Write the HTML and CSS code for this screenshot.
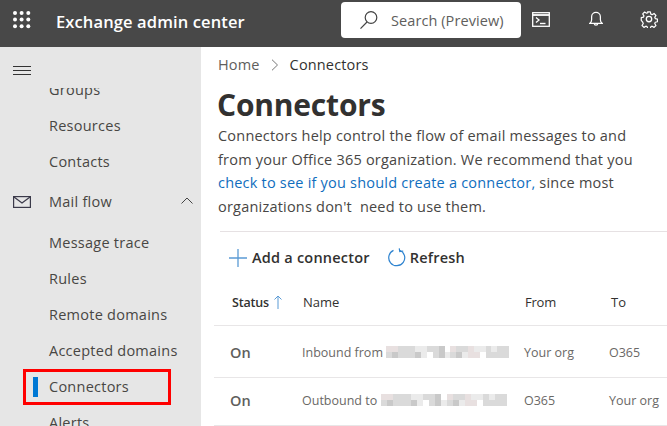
FILE: index.html
```html
<!DOCTYPE html>
<html lang="en">
<head>
<meta charset="utf-8">
<title>Exchange admin center</title>
<link rel="stylesheet" href="styles.css">
</head>
<body>
<header class="topbar">
  <svg class="waffle" width="18" height="18" viewBox="0 0 18 18" fill="#fff"><circle cx="2" cy="2" r="2"/><circle cx="8.6" cy="2" r="2"/><circle cx="15.3" cy="2" r="2"/><circle cx="2" cy="8.6" r="2"/><circle cx="8.6" cy="8.6" r="2"/><circle cx="15.3" cy="8.6" r="2"/><circle cx="2" cy="15.3" r="2"/><circle cx="8.6" cy="15.3" r="2"/><circle cx="15.3" cy="15.3" r="2"/></svg>
  <div class="brand">Exchange admin center</div>
  <div class="search">
    <svg width="20" height="20" viewBox="0 0 20 20" fill="none" stroke="#444" stroke-width="1.2"><circle cx="12" cy="7.5" r="5.8"/><path d="M8 12 1.5 18.6"/></svg>
    <span>Search (Preview)</span>
  </div>
  <div class="actions">
    <svg width="18" height="15" viewBox="0 0 18 15" fill="none" stroke="#fff" stroke-width="1.3"><rect x=".7" y=".7" width="16.6" height="13.6"/><path d="M.7 3h16.6" stroke-width="1.8"/><path d="m4 5.500 3 2.500-3 2.500" stroke-width="1.3"/><path d="M8 11.500h5.500" stroke-width="1.4"/></svg>
    <svg width="14" height="16" viewBox="0 0 16 17" fill="none" stroke="#fff" stroke-width="1.4"><path d="M1 13.400c1.400-1 2-2 2-4V6a5 5 0 0 1 10 0v3.400c0 2 .6 3 2 4z"/><path d="M6 13.500a2 2 0 0 0 4 0"/></svg>
    <svg width="18" height="18" viewBox="0 0 24 24" fill="none" stroke="#fff" stroke-width="1.8" stroke-linejoin="round"><circle cx="12" cy="12" r="3.600"/><path d="M10 1.500h4l.7 3.300 1.900.8 2.900-1.800 2.800 2.800-1.800 2.900.8 1.900 3.200.7v4l-3.200.7-.8 1.900 1.800 2.900-2.800 2.800-2.900-1.800-1.900.8-.7 3.200h-4l-.7-3.200-1.900-.8-2.900 1.800-2.800-2.800 1.800-2.900-.8-1.900L.5 14v-4l3.200-.7.8-1.900-1.800-2.900 2.800-2.800 2.900 1.800 1.900-.8z" transform="translate(1.200 1.200) scale(.9)"/></svg>
  </div>
</header>
<div class="shell">
  <aside class="sidebar">
    <div class="toggle">
      <svg width="18" height="9" viewBox="0 0 18 9" stroke="#333" stroke-width="1"><path d="M0 .5h18M0 4.500h18M0 8.500h18"/></svg>
    </div>
    <nav class="nav">
      <div class="nav-scroll">
        <a class="nav-item">Groups</a>
        <a class="nav-item">Resources</a>
        <a class="nav-item">Contacts</a>
        <a class="nav-group">
          <svg class="mail" width="18" height="12" viewBox="0 0 18 12" fill="none" stroke="#3b3a4a" stroke-width="1.2"><rect x=".6" y=".6" width="16.800" height="10.800"/><path d="m1 1 8 6 8-6"/></svg>
          <span>Mail flow</span>
          <svg class="chev" width="12" height="7" viewBox="0 0 12 7" fill="none" stroke="#444" stroke-width="1"><path d="m.5 6.500 5.500-5.500 5.500 5.500"/></svg>
        </a>
        <div class="subnav">
          <a class="nav-item">Message trace</a>
          <a class="nav-item">Rules</a>
          <a class="nav-item">Remote domains</a>
          <a class="nav-item">Accepted domains</a>
          <a class="nav-item active">Connectors</a>
          <a class="nav-item">Alerts</a>
        </div>
      </div>
    </nav>
  </aside>
  <main class="content">
    <div class="crumbs"><span class="home">Home</span><svg width="8" height="12" viewBox="0 0 8 12" fill="none" stroke="#777" stroke-width="1"><path d="m1 .7 5.500 5.300L1 11.300"/></svg><span>Connectors</span></div>
    <h1>Connectors</h1>
    <p class="intro">Connectors help control the flow of email messages to and<br>from your Office 365 organization. We recommend that you<br><a class="link">check to see if you should create a connector,</a> since most<br>organizations don't&nbsp; need to use them.</p>
    <div class="toolbar">
      <button class="tool">
        <svg width="18" height="18" viewBox="0 0 18 18" stroke="#5b9bd5" stroke-width="1.300"><path d="M9 0v18M0 9h18"/></svg>
        <span>Add a connector</span>
      </button>
      <button class="tool refresh">
        <svg width="19" height="19" viewBox="0 0 19 19" fill="none" stroke="#2f84d0" stroke-width="1.200"><path d="M6.500 2.400a8 8 0 1 0 6-.2"/><path d="M12.500 0.500v3.200H16" transform="rotate(-10 12 2)"/></svg>
        <span>Refresh</span>
      </button>
    </div>
    <div class="row head">
      <div class="c-status"><b>Status</b><svg width="8" height="14" viewBox="0 0 8 14" fill="none" stroke="#5b9bd5" stroke-width="1"><path d="M4 14V1M.5 4.500 4 1l3.500 3.500"/></svg></div>
      <div class="c-name">Name</div>
      <div class="c-from">From</div>
      <div class="c-to">To</div>
    </div>
    <div class="row item first">
      <div class="c-status on">On</div>
      <div class="c-name"><span>Inbound from</span>
        <svg class="mosaic" width="123" height="12" viewBox="0 0 21 2" shape-rendering="crispEdges"><g fill="#e8e0e0"><path d="M0 0h2v1H0zM11 0h1v1h-1zM14 0h1v1h-1zM14 1h2v1h-2z"/></g><g fill="#dadada"><path d="M2 0h3v1H2zM7 0h2v1H7zM12 0h2v1h-2zM17 0h1v1h-1zM19 0h2v1h-2zM0 1h1v1H0zM2 1h3v1H2zM8 1h1v1H8zM11 1h1v1h-1zM17 1h4v1h-4z"/></g><g fill="#c9c9c9"><path d="M9 0h1v1H9zM1 1h1v1H1zM5 1h1v1H5zM9 1h1v1H9zM12 1h1v1h-1z"/></g><g fill="#ebebeb"><path d="M5 0h2v1H5zM15 0h2v1h-2zM6 1h1v1H6zM10 1h1v1h-1zM13 1h1v1h-1zM18 0h1v1h-1z"/></g></svg>
      </div>
      <div class="c-from">Your org</div>
      <div class="c-to">O365</div>
    </div>
    <div class="row item">
      <div class="c-status on">On</div>
      <div class="c-name"><span>Outbound to</span>
        <svg class="mosaic wide" width="128" height="12" viewBox="0 0 21 2" shape-rendering="crispEdges"><g fill="#e8e0e0"><path d="M0 0h2v1H0zM11 0h1v1h-1zM14 0h1v1h-1zM14 1h2v1h-2z"/></g><g fill="#dadada"><path d="M2 0h3v1H2zM7 0h2v1H7zM12 0h2v1h-2zM17 0h1v1h-1zM19 0h2v1h-2zM0 1h1v1H0zM2 1h3v1H2zM8 1h1v1H8zM11 1h1v1h-1zM17 1h4v1h-4z"/></g><g fill="#c9c9c9"><path d="M9 0h1v1H9zM1 1h1v1H1zM5 1h1v1H5zM9 1h1v1H9zM12 1h1v1h-1z"/></g><g fill="#ebebeb"><path d="M5 0h2v1H5zM15 0h2v1h-2zM6 1h1v1H6zM10 1h1v1h-1zM13 1h1v1h-1zM18 0h1v1h-1z"/></g></svg>
      </div>
      <div class="c-from">O365</div>
      <div class="c-to">Your org</div>
    </div>
  </main>
</div>
</body>
</html>
```

FILE: styles.css
```css
*, *::before, *::after { box-sizing: border-box; }
html, body { margin: 0; height: 100%; }
body {
  width: 667px;
  height: 426px;
  overflow: hidden;
  display: flex;
  flex-direction: column;
  font-family: "Open Sans", "Noto Sans", "Liberation Sans", sans-serif;
  color: #323130;
  background: #fff;
}
svg { display: block; flex: none; }

.topbar {
  height: 47px;
  flex: none;
  display: flex;
  align-items: center;
  background: #484848;
  color: #fff;
}
.waffle { margin-left: 13px; align-self: flex-start; margin-top: 11px; }
.brand {
  margin-left: 25px;
  width: 285px;
  font-size: 16.500px;
  font-weight: 600;
  letter-spacing: .12px;
  padding-bottom: 5px;
}
.search {
  width: 180px;
  height: 36px;
  margin-top: -7px;
  background: #fff;
  border-radius: 4px;
  display: flex;
  align-items: center;
  padding-left: 18px;
  gap: 12px;
  color: #605e5c;
  font-size: 14.500px;
  letter-spacing: .08px;
}
.actions {
  display: flex;
  align-items: center;
  margin-left: 11px;
  margin-top: -9px;
}
.actions svg:nth-child(2) { margin-left: 39px; }
.actions svg:nth-child(3) { margin-left: 37px; }

.shell { flex: 1; display: flex; min-height: 0; }
.sidebar {
  width: 201px;
  flex: none;
  background: #e6e6e6;
  display: flex;
  flex-direction: column;
  min-height: 0;
}
.toggle { height: 41px; padding: 19px 0 0 13px; flex: none; }
.nav { flex: 1; overflow: hidden; min-height: 0; }
.nav-scroll { margin-top: -16px; }
.nav-item {
  display: block;
  height: 36px;
  line-height: 35px;
  padding-left: 49px;
  font-size: 14.500px;
  letter-spacing: .25px;
  color: #484644;
  position: relative;
}
.nav-group {
  height: 42px;
  padding-top: 1px;
  display: flex;
  align-items: center;
  font-size: 14.500px;
  letter-spacing: .25px;
  color: #484644;
  padding-left: 13px;
}
.nav-group span { margin-left: 18px; flex: 1; }
.chev { margin: 0 8px 3px 0; }
.subnav { margin-top: 3px; }
.active::before {
  content: "";
  position: absolute;
  left: 33px;
  top: 8px;
  width: 5px;
  height: 20px;
  background: #0078d4;
}
.active::after {
  content: "";
  position: absolute;
  left: 23px;
  top: 0;
  width: 148px;
  height: 36px;
  border: 3px solid #f00;
}

.content { flex: 1; min-width: 0; }
.crumbs {
  height: 36px;
  padding: 0 0 1px 17px;
  display: flex;
  align-items: center;
  font-size: 14.500px;
  letter-spacing: .15px;
  gap: 10px;
}
.home { color: #605e5c; margin-right: 1px; }
.crumbs svg { margin-right: 1px; }
h1 {
  margin: 0;
  padding-left: 16px;
  font-size: 30px;
  line-height: 44px;
  font-weight: 700;
  letter-spacing: -.2px;
  height: 41px;
}
.intro {
  margin: 0;
  padding-left: 17px;
  font-size: 14.500px;
  line-height: 23.700px;
  letter-spacing: .21px;
  color: #484644;
  height: 107px;
}
.link { color: #106ebe; }
.toolbar {
  margin-left: 19px;
  height: 52px;
  border-top: 1px solid #e6e1e3;
  display: flex;
  align-items: center;
  padding-left: 9px;
}
.tool {
  display: flex;
  align-items: center;
  gap: 5px;
  border: 0;
  background: none;
  padding: 0;
  font: inherit;
  font-weight: 600;
  font-size: 14.500px;
  letter-spacing: .22px;
  color: #323130;
}
.refresh { margin-left: 17px; gap: 4px; }
.row {
  margin-left: 13px;
  display: flex;
  align-items: center;
  border-bottom: 1px solid #e8e6e7;
  font-size: 12.500px;
}
.head { height: 43px; color: #323130; padding-bottom: 4px; font-size: 13px; }
.item { height: 52px; color: #6a6866; padding-top: 1px; }
.item + .item { height: 48px; padding: 0 0 2px; }
.c-status { width: 89px; padding-left: 18px; display: flex; align-items: center; gap: 5px; }
.c-status b { font-weight: 600; font-size: 12.500px; letter-spacing: -.2px; }
.c-name { width: 221px; display: flex; align-items: center; gap: 2px; white-space: nowrap; }
.item .c-name { margin-left: -1px; width: 222px; gap: 3px; }
.c-from { width: 85px; }
.c-to { white-space: nowrap; }
.item .c-status { padding-left: 16px; }
.head .c-from, .head .c-to { padding-left: 1px; }
.head .c-from { width: 86px; letter-spacing: -.2px; }
.on { font-weight: 600; font-size: 14.500px; color: #605e5c; }
.mosaic { margin-top: -1px; }
```
